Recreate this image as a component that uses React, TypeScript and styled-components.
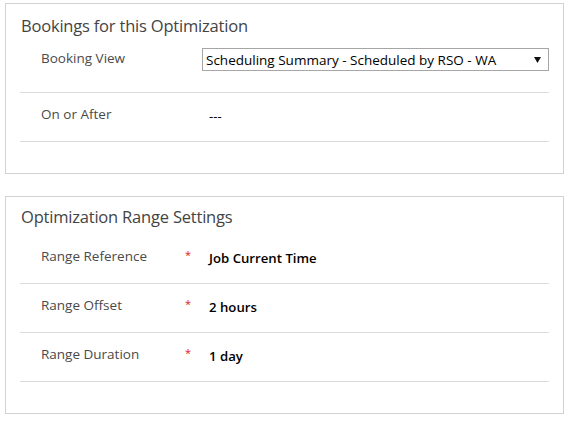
import React from "react";
import styled, { createGlobalStyle } from "styled-components";

const Global = createGlobalStyle`
  html, body { margin: 0; padding: 0; background: #ffffff; }
  body { font-family: "Open Sans", "Noto Sans", Arial, sans-serif; }
`;

const Page = styled.div`
  display: flex;
  flex-direction: column;
  gap: 22px;
  padding: 3px 6px 0 5px;
`;

const Panel = styled.section`
  border: 1px solid #d2d2d2;
  background: #fff;
  padding: 0 14px 31px 14px;
`;

const Title = styled.h2<{ $wide?: boolean }>`
  margin: 0;
  padding: ${(p) => (p.$wide ? "9px 0 0 1px" : "11px 0 0 1px")};
  height: ${(p) => (p.$wide ? "38px" : "33px")};
  box-sizing: border-box;
  font-size: 16.5px;
  line-height: 22px;
  font-weight: 400;
  color: #444;
  letter-spacing: -0.2px;
`;

const Row = styled.div<{ $tall?: boolean }>`
  display: grid;
  grid-template-columns: 144px 17px 1fr;
  align-items: start;
  padding: ${(p) => (p.$tall ? "11px 0 21px 21px" : "11px 0 15px 21px")};
  border-bottom: 1px solid #dcdcdc;
`;

const Label = styled.div`
  font-size: 13.5px;
  line-height: 20px;
  color: #4a4a4a;
  white-space: nowrap;
`;

const Req = styled.span`
  color: #e02020;
  font-size: 11px;
  line-height: 14px;
  padding-top: 2px;
`;

const Value = styled.div<{ $plain?: boolean }>`
  padding: 2px 0 0 7px;
  font-size: 13.2px;
  line-height: 20px;
  font-weight: ${(p) => (p.$plain ? 400 : 600)};
  color: #000;
`;

const Select = styled.div`
  display: flex;
  align-items: center;
  justify-content: space-between;
  height: 23px;
  box-sizing: border-box;
  border: 1px solid #a6a6a6;
  padding: 0 7px 0 3px;
  font-size: 13.5px;
  color: #000;
  background: #fff;
  white-space: nowrap;
`;

const Caret = () => (
  <svg width="7" height="6" viewBox="0 0 7 6">
    <path d="M0 0 H7 L3.5 6 Z" fill="#111" />
  </svg>
);

type Field = { label: string; value: string; required?: boolean };

const rangeFields: Field[] = [
  { label: "Range Reference", value: "Job Current Time", required: true },
  { label: "Range Offset", value: "2 hours", required: true },
  { label: "Range Duration", value: "1 day", required: true },
];

export default function App() {
  return (
    <>
      <Global />
      <Page>
        <Panel>
          <Title>Bookings for this Optimization</Title>
          <Row $tall>
            <Label>Booking View</Label>
            <span />
            <Select>
              <span>Scheduling Summary - Scheduled by RSO - WA</span>
              <Caret />
            </Select>
          </Row>
          <Row>
            <Label>On or After</Label>
            <span />
            <Value $plain>---</Value>
          </Row>
        </Panel>
        <Panel>
          <Title $wide>Optimization Range Settings</Title>
          {rangeFields.map((f) => (
            <Row key={f.label}>
              <Label>{f.label}</Label>
              <Req>{f.required ? "*" : ""}</Req>
              <Value>{f.value}</Value>
            </Row>
          ))}
        </Panel>
      </Page>
    </>
  );
}
